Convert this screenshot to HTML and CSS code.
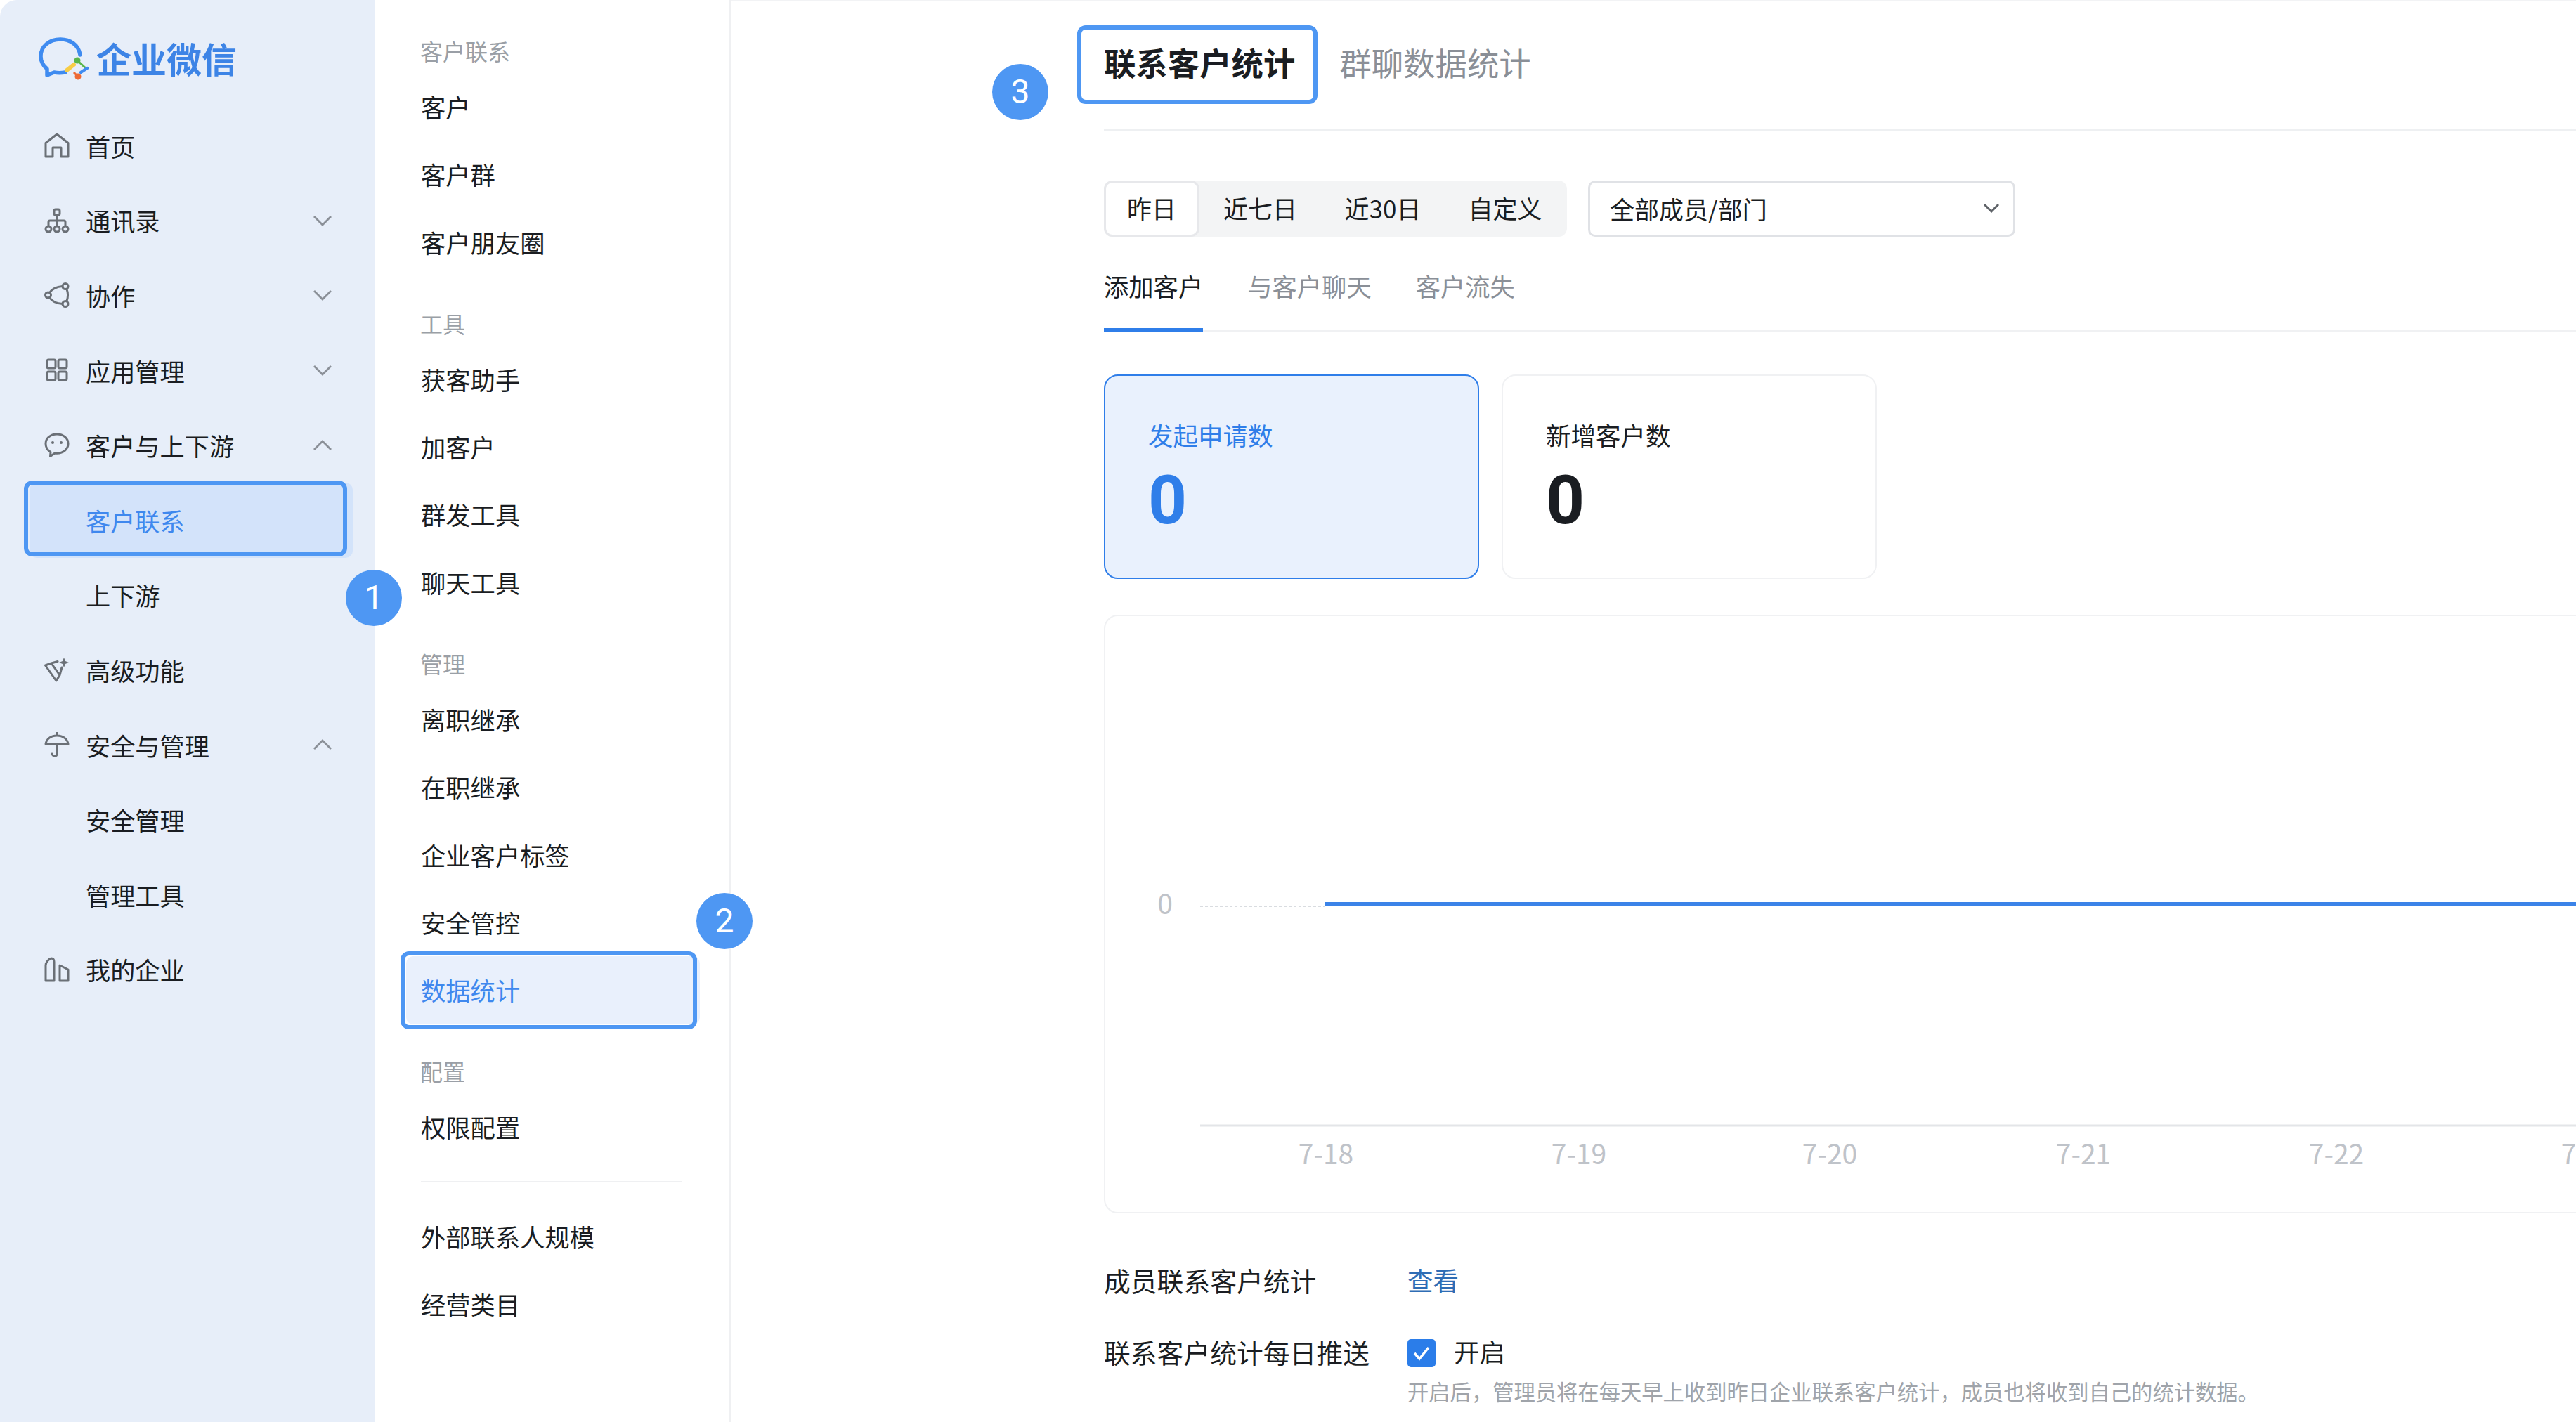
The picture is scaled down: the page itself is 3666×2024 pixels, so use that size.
FILE: index.html
```html
<!DOCTYPE html>
<html lang="zh-CN">
<head>
    <meta charset="UTF-8">
    <title>企业微信</title>
    <link rel="stylesheet" href="styles.css">
</head>
<body>
    <div class="page">
        <aside class="side-nav">
            <div class="logo">
                <svg class="logo-icon" viewBox="0 0 72 62" fill="none">
                    <path d="M59 25C57 11 45 3 31 3C15 3 3 13 3 27C3 35 7 41 12 45L12 54L22 50C27 51 32 51 38 50" stroke="#3f8bf0" stroke-width="5.500" stroke-linecap="round" stroke-linejoin="round"/>
                    <path d="M55 33L67 44" stroke="#5ab64a" stroke-width="3"/>
                    <circle cx="55" cy="33" r="4.500" fill="#5ab64a"/>
                    <path d="M40 47L50 39" stroke="#f7cd46" stroke-width="6" stroke-linecap="round"/>
                    <circle cx="56" cy="56" r="4.500" fill="#ee6a36"/>
                    <path d="M50 50L56 56" stroke="#ee6a36" stroke-width="3"/>
                    <path d="M60 50L69 44" stroke="#3f8bf0" stroke-width="4.500" stroke-linecap="round"/>
                </svg>
                <span class="logo-text">企业微信</span>
            </div>
            <ul class="nav-list">
                <li class="nav-item">
                    <svg class="nav-icon" viewBox="0 0 36 36"><path d="M2 34V14.500L18 2L34 14.500V34H24V21H12V34Z"/></svg>
                    <span>首页</span>
                </li>
                <li class="nav-item">
                    <svg class="nav-icon" viewBox="0 0 36 36"><rect x="14" y="2" width="8" height="8" rx="2"/><path d="M18 10V18M6 25V20C6 18.500 7 18 8 18H28C29 18 30 18.500 30 20V25M18 18V25"/><circle cx="6" cy="30" r="4"/><circle cx="18" cy="30" r="4"/><circle cx="30" cy="30" r="4"/></svg>
                    <span>通讯录</span>
                    <svg class="chevron" viewBox="0 0 26 16"><path d="M1 2L13 14L25 2"/></svg>
                </li>
                <li class="nav-item">
                    <svg class="nav-icon" viewBox="0 0 36 36"><circle cx="5.500" cy="18" r="4"/><circle cx="30" cy="5.500" r="4"/><circle cx="30" cy="30.500" r="4"/><path d="M7.500 14.500C11 9.500 18 6 26 5.500M7.500 21.500C11 27 18 30 26 30.500M32 9.500C34 15 34 21 32 26.500"/></svg>
                    <span>协作</span>
                    <svg class="chevron" viewBox="0 0 26 16"><path d="M1 2L13 14L25 2"/></svg>
                </li>
                <li class="nav-item">
                    <svg class="nav-icon" viewBox="0 0 36 36"><rect x="4" y="3" width="12" height="12" rx="2"/><rect x="20" y="3" width="12" height="12" rx="2"/><rect x="4" y="20" width="12" height="12" rx="2"/><rect x="20" y="20" width="12" height="12" rx="2"/></svg>
                    <span>应用管理</span>
                    <svg class="chevron" viewBox="0 0 26 16"><path d="M1 2L13 14L25 2"/></svg>
                </li>
                <li class="nav-item">
                    <svg class="nav-icon" viewBox="0 0 36 36"><path d="M18 2C8.500 2 2 8 2 15.500C2 21 5 25 9 27.500L8.500 33.500L15 29C16 29.200 17 29.300 18 29.300C27.500 29.300 34 23 34 15.500C34 8 27.500 2 18 2Z"/><circle class="dot" cx="12" cy="14" r="2"/><circle class="dot" cx="24" cy="14" r="2"/></svg>
                    <span>客户与上下游</span>
                    <svg class="chevron" viewBox="0 0 26 16"><path d="M1 14L13 2L25 14"/></svg>
                </li>
                <li class="nav-item sub-item sub-active"><span>客户联系</span></li>
                <li class="nav-item sub-item"><span>上下游</span></li>
                <li class="nav-item">
                    <svg class="nav-icon" viewBox="0 0 36 36"><path d="M1.500 12L10 9L22 26L17 34ZM10 9L19 6.500M22 26L25 15"/><path class="solid" d="M28 1L30 6L35 8L30 10L28 15L26 10L21 8L26 6Z"/></svg>
                    <span>高级功能</span>
                </li>
                <li class="nav-item">
                    <svg class="nav-icon" viewBox="0 0 36 36"><path d="M18 1V5M2 17C3 10 9 5 18 5C27 5 33 10 34 17ZM18 17V31C18 35 12 35 11 31"/></svg>
                    <span>安全与管理</span>
                    <svg class="chevron" viewBox="0 0 26 16"><path d="M1 14L13 2L25 14"/></svg>
                </li>
                <li class="nav-item sub-item"><span>安全管理</span></li>
                <li class="nav-item sub-item"><span>管理工具</span></li>
                <li class="nav-item">
                    <svg class="nav-icon" viewBox="0 0 36 36"><path d="M2 34V12C2 8 6 3 10 2C13 2 14 4 14 7V34ZM22 34V12L34 18V34Z"/></svg>
                    <span>我的企业</span>
                </li>
            </ul>
        </aside>

        <nav class="sub-nav">
            <div class="sub-group">
                <div class="sub-label">客户联系</div>
                <a class="sub-link">客户</a>
                <a class="sub-link">客户群</a>
                <a class="sub-link">客户朋友圈</a>
            </div>
            <div class="sub-group">
                <div class="sub-label">工具</div>
                <a class="sub-link">获客助手</a>
                <a class="sub-link">加客户</a>
                <a class="sub-link">群发工具</a>
                <a class="sub-link">聊天工具</a>
            </div>
            <div class="sub-group">
                <div class="sub-label">管理</div>
                <a class="sub-link">离职继承</a>
                <a class="sub-link">在职继承</a>
                <a class="sub-link">企业客户标签</a>
                <a class="sub-link">安全管控</a>
                <a class="sub-link sub-link-active">数据统计</a>
            </div>
            <div class="sub-group">
                <div class="sub-label">配置</div>
                <a class="sub-link">权限配置</a>
            </div>
            <div class="sub-divider"></div>
            <a class="sub-link">外部联系人规模</a>
            <a class="sub-link">经营类目</a>
        </nav>

        <main class="main-content">
            <div class="page-tabs">
                <span class="page-tab page-tab-active">联系客户统计</span>
                <span class="page-tab">群聊数据统计</span>
            </div>

            <div class="filter-row">
                <div class="range-group">
                    <span class="range-item range-item-active">昨日</span>
                    <span class="range-item">近七日</span>
                    <span class="range-item">近30日</span>
                    <span class="range-item">自定义</span>
                </div>
                <div class="member-select">
                    <span>全部成员/部门</span>
                    <svg class="select-arrow" viewBox="0 0 24 14"><path d="M2 2L12 12L22 2"/></svg>
                </div>
            </div>

            <div class="stat-tabs">
                <span class="stat-tab stat-tab-active">添加客户</span>
                <span class="stat-tab">与客户聊天</span>
                <span class="stat-tab">客户流失</span>
            </div>

            <div class="stat-cards">
                <div class="stat-card stat-card-active">
                    <div class="stat-title">发起申请数</div>
                    <div class="stat-value">0</div>
                </div>
                <div class="stat-card">
                    <div class="stat-title">新增客户数</div>
                    <div class="stat-value">0</div>
                </div>
            </div>

            <div class="chart-card">
                <svg class="chart" width="2300" height="848" viewBox="0 0 2300 848">
                    <text class="chart-text" x="85" y="407">0</text>
                    <line class="chart-dash" x1="135" y1="413" x2="312" y2="413"/>
                    <line class="chart-line" x1="312" y1="410" x2="2300" y2="410"/>
                    <line class="chart-axis" x1="135" y1="725" x2="2300" y2="725"/>
                    <text class="chart-text" x="314" y="763">7-18</text>
                    <text class="chart-text" x="674" y="763">7-19</text>
                    <text class="chart-text" x="1031" y="763">7-20</text>
                    <text class="chart-text" x="1392" y="763">7-21</text>
                    <text class="chart-text" x="1752" y="763">7-22</text>
                    <text class="chart-text" x="2111" y="763">7-23</text>
                </svg>
            </div>

            <div class="setting-row">
                <div class="setting-label">成员联系客户统计</div>
                <a class="setting-link">查看</a>
            </div>
            <div class="setting-row setting-row-push">
                <div class="setting-label">联系客户统计每日推送</div>
                <div class="setting-body">
                    <label class="check-line">
                        <span class="check-box">
                            <svg viewBox="0 0 40 40"><path d="M10 20L17 28L30 12"/></svg>
                        </span>
                        <span>开启</span>
                    </label>
                    <div class="setting-hint">开启后&#65292;管理员将在每天早上收到昨日企业联系客户统计&#65292;成员也将收到自己的统计数据。</div>
                </div>
            </div>
        </main>

        <!-- annotations drawn over the screenshot -->
        <div class="mark-box mark-box-1"></div>
        <div class="mark-box mark-box-2"></div>
        <div class="mark-box mark-box-3"></div>
        <div class="mark-badge mark-badge-1">1</div>
        <div class="mark-badge mark-badge-2">2</div>
        <div class="mark-badge mark-badge-3">3</div>
    </div>
</body>
</html>
```

FILE: styles.css
```css
*{
    box-sizing: border-box;
}
html, body{
    margin: 0;
    height: 100%;
    background-color: #fff;
}
body{
    overflow: hidden;
    font-family: "Noto Sans CJK SC", "Liberation Sans", sans-serif;
    color: #1a1d22;
}
.page{
    position: relative;
    display: flex;
    width: 3666px;
    height: 2024px;
    overflow: hidden;
}

/* left menu */
.side-nav{
    flex: none;
    width: 533px;
    height: 100%;
    background-color: #e7eef9;
    border-top-left-radius: 24px;
}
.logo{
    display: flex;
    align-items: center;
    height: 154px;
    padding: 14px 0 0 55px;
}
.logo-icon{
    width: 72px;
    height: 62px;
    margin-right: 10px;
}
.logo-text{
    margin-top: -4px;
    font-size: 50px;
    font-weight: 700;
    line-height: 60px;
    color: #3d84e6;
}
.nav-list{
    margin: 0;
    padding: 0;
    list-style: none;
}
.nav-item{
    display: flex;
    align-items: center;
    height: 106.6px;
    padding: 0 61px 0 63px;
    font-size: 35.2px;
}
.nav-icon{
    flex: none;
    width: 36px;
    height: 36px;
    margin-right: 23px;
    fill: none;
    stroke: #6b7077;
    stroke-width: 3;
    stroke-linejoin: round;
    stroke-linecap: round;
}
.nav-icon .dot{
    fill: #6b7077;
    stroke: none;
}
.nav-icon .solid{
    fill: #6b7077;
    stroke: none;
}
.chevron{
    flex: none;
    width: 26px;
    height: 16px;
    margin-left: auto;
    fill: none;
    stroke: #8b9098;
    stroke-width: 2.800;
}
.sub-item{
    padding-left: 122px;
}
.sub-active{
    margin: 0 31px 0 42px;
    padding-left: 80px;
    border-radius: 10px;
    background-color: #d3e3fa;
    color: #3f88ee;
}

/* second menu */
.sub-nav{
    flex: none;
    width: 507px;
    height: 100%;
    padding-top: 40px;
    border-right: 3px solid #eff0f2;
}
.sub-group{
    margin-bottom: 34.5px;
}
.sub-label{
    height: 64px;
    padding-left: 65px;
    font-size: 32px;
    line-height: 64px;
    color: #9a9fa6;
}
.sub-link{
    display: block;
    height: 96.4px;
    margin: 0 41px 0 45px;
    padding-left: 21px;
    font-size: 35.3px;
    line-height: 96.4px;
    border-radius: 10px;
}
.sub-link-active{
    background-color: #e9f0fc;
    color: #3f88ee;
}
.sub-divider{
    height: 2px;
    margin: -6px 67px 29px 66px;
    background-color: #eff0f2;
}

/* main area */
.main-content{
    flex: none;
    width: 2626px;
    height: 100%;
    padding-left: 531px;
    border-top: 1px solid #f2f3f5;
}
.page-tabs{
    display: flex;
    gap: 63px;
    height: 185px;
    padding-top: 51px;
    border-bottom: 2px solid #eef0f2;
}
.page-tab{
    font-size: 45.4px;
    line-height: 72px;
    color: #8a8f97;
}
.page-tab-active{
    font-weight: 700;
    color: #1a1d22;
}
.filter-row{
    display: flex;
    gap: 30px;
    margin-top: 71px;
    height: 80px;
}
.range-group{
    display: flex;
    width: 659px;
    border-radius: 12px;
    background-color: #f3f4f5;
}
.range-item{
    width: 173px;
    font-size: 35px;
    line-height: 78px;
    text-align: center;
}
.range-item:nth-child(3){
    width: 176px;
}
.range-item:nth-child(4){
    width: 172px;
}
.range-item-active{
    width: 136px;
    border: 3px solid #e7e8eb;
    border-radius: 12px;
    background-color: #fff;
    line-height: 72px;
}
.member-select{
    display: flex;
    align-items: center;
    justify-content: space-between;
    width: 608px;
    padding: 0 19px 2px 28px;
    border: 3px solid #e0e2e6;
    border-radius: 10px;
    font-size: 35px;
}
.select-arrow{
    width: 24px;
    height: 14px;
    fill: none;
    stroke: #5f6368;
    stroke-width: 3;
}
.stat-tabs{
    display: flex;
    gap: 63px;
    height: 135px;
    padding-top: 30px;
    border-bottom: 3px solid #f0f1f3;
}
.stat-tab{
    height: 105px;
    font-size: 35.3px;
    line-height: 80px;
    color: #8a8f97;
}
.stat-tab-active{
    border-bottom: 5px solid #2f7ee9;
    color: #1a1d22;
}
.stat-cards{
    display: flex;
    gap: 32px;
    margin-top: 61px;
}
.stat-card{
    width: 534px;
    height: 291px;
    padding: 59px 0 0 61px;
    border: 2px solid #f0f1f3;
    border-radius: 20px;
}
.stat-card-active{
    border-color: #2f7ee9;
    background-color: #e9f1fd;
    color: #2f7ee9;
}
.stat-title{
    font-size: 35.5px;
    line-height: 50px;
}
.stat-value{
    margin-top: 20px;
    font-family: Roboto, "Liberation Sans", sans-serif;
    font-size: 96px;
    font-weight: 700;
    line-height: 96px;
}
.chart-card{
    width: 2300px;
    height: 852px;
    margin-top: 51px;
    border: 2px solid #f0f1f3;
    border-radius: 20px;
    overflow: hidden;
}
.chart{
    display: block;
}
.chart-text{
    font-size: 39px;
    fill: #bfc3c9;
    text-anchor: middle;
    dominant-baseline: central;
}
.chart-dash{
    stroke: #d9dce0;
    stroke-width: 2;
    stroke-dasharray: 4 3;
}
.chart-line{
    stroke: #3b83e8;
    stroke-width: 6;
}
.chart-axis{
    stroke: #e3e5e8;
    stroke-width: 3;
}
.setting-row{
    display: flex;
    margin-top: 55px;
    font-size: 36.5px;
    line-height: 80px;
}
.setting-row-push{
    margin-top: 22px;
}
.setting-label{
    flex: none;
    width: 432px;
    font-size: 37.8px;
}
.setting-link{
    color: #2f6db5;
}
.check-line{
    display: flex;
    align-items: center;
    gap: 26px;
    height: 80px;
}
.check-box{
    width: 40px;
    height: 40px;
    margin-top: 3px;
    border-radius: 5px;
    background-color: #2b7de9;
}
.check-box svg{
    display: block;
    width: 100%;
    height: 100%;
    fill: none;
    stroke: #fff;
    stroke-width: 3.500;
}
.setting-hint{
    font-size: 30.3px;
    line-height: 32px;
    color: #a0a4aa;
}

/* annotations */
.mark-box{
    position: absolute;
    border: 6px solid #4e97f3;
    border-radius: 12px;
}
.mark-box-1{
    left: 34px;
    top: 684px;
    width: 460px;
    height: 108px;
}
.mark-box-2{
    left: 570px;
    top: 1354px;
    width: 422px;
    height: 111px;
}
.mark-box-3{
    left: 1533px;
    top: 36px;
    width: 342px;
    height: 112px;
}
.mark-badge{
    position: absolute;
    width: 80px;
    height: 80px;
    border-radius: 50%;
    background-color: #4e97f3;
    font-family: Roboto, "Liberation Sans", sans-serif;
    font-size: 48px;
    line-height: 80px;
    text-align: center;
    color: #fff;
}
.mark-badge-1{
    left: 492px;
    top: 811px;
}
.mark-badge-2{
    left: 991px;
    top: 1271px;
}
.mark-badge-3{
    left: 1412px;
    top: 91px;
}
```
